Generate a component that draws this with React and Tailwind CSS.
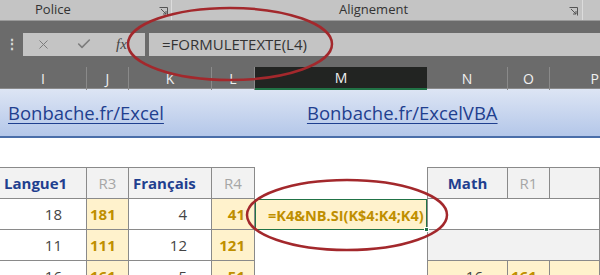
import { X, Check } from 'lucide-react';

const font = { fontFamily: '"Open Sans", "Noto Sans", sans-serif' };

// small ribbon dialog-launcher glyph
const Launcher = () => (
  <svg width="9" height="9" viewBox="0 0 9 9" className="text-[#555]">
    <path d="M0.5 0.5h8v8" fill="none" stroke="currentColor" strokeWidth="1" />
    <path d="M2 2l5 5M4 7h3V4" fill="none" stroke="currentColor" strokeWidth="1" />
  </svg>
);

const cols = 'grid grid-cols-[87px_42px_83px_43px_172px_81px_42px_1fr]';

const Cell = ({ className = '', children }) => (
  <div className={`h-[31px] box-border flex items-center border-r border-b border-[#8a8a8a] ${className}`}>
    {children}
  </div>
);

const Blank = ({ className = '', children }) => (
  <div className={`h-[31px] box-border flex items-center ${className}`}>{children}</div>
);

export default function App() {
  return (
    <div className="w-[600px] h-[275px] overflow-hidden bg-white relative" style={font}>
      {/* ribbon group labels */}
      <div className="h-[21px] bg-[#c4c4c4] flex items-center text-[13px] text-[#333] border-b border-[#9a9a9a]">
        <div className="w-[172px] h-full flex items-center relative border-r border-[#dcdcdc]">
          <span className="ml-[35px]">Police</span>
          <span className="absolute right-[3px] top-[7px]"><Launcher /></span>
        </div>
        <div className="w-[411px] h-full flex items-center relative border-r border-[#dcdcdc]">
          <span className="ml-[167px]">Alignement</span>
          <span className="absolute right-[4px] top-[7px]"><Launcher /></span>
        </div>
      </div>

      {/* formula bar */}
      <div className="h-[46px] bg-[#6b6b6b] flex items-center">
        <div className="w-[23px] flex justify-center text-[#d8d8d8] text-[14px] font-bold leading-none">⋮</div>
        <div className="w-[122px] h-[23px] bg-[#c4c4c4] flex items-center text-[#7c7c7c]">
          <X size={15} strokeWidth={1.6} className="ml-[13px]" />
          <Check size={16} strokeWidth={2.4} className="ml-[25px]" />
          <span className="ml-[24px] italic text-[15px] text-[#444]" style={{ fontFamily: '"Liberation Serif", serif' }}>fx</span>
        </div>
        <div className="ml-[4px] flex-1 h-[23px] bg-[#c4c4c4] flex items-center pl-[13px] text-[15px] text-[#333]">
          =FORMULETEXTE(L4)
        </div>
      </div>

      {/* column headers */}
      <div className="h-[22px] bg-[#6b6b6b] grid grid-cols-[87px_42px_83px_43px_172px_81px_42px_1fr] text-[14px] text-[#f0f0f0] border-b border-[#8a8a8a]">
        <div className="flex items-center justify-center border-r border-[#8a8a8a]">I</div>
        <div className="flex items-center justify-center border-r border-[#8a8a8a]">J</div>
        <div className="flex items-center justify-center border-r border-[#8a8a8a]">K</div>
        <div className="flex items-center justify-center border-r border-[#8a8a8a]">L</div>
        <div className="flex items-center justify-center bg-[#222422] border-b-2 border-[#217346]">M</div>
        <div className="flex items-center justify-center border-r border-[#8a8a8a]">N</div>
        <div className="flex items-center justify-center border-r border-[#8a8a8a]">O</div>
        <div className="flex items-center justify-end pr-[1px]">P</div>
      </div>

      {/* link banner */}
      <div className="h-[49px] bg-gradient-to-b from-[#dde5f4] to-[#b4c7e9] border-b-2 border-[#4a6ea9] flex items-center text-[18.5px] text-[#1f3f8f]">
        <span className="ml-[8px] underline underline-offset-[3px] decoration-1">Bonbache.fr/Excel</span>
        <span className="ml-[143px] underline underline-offset-[3px] decoration-1">Bonbache.fr/ExcelVBA</span>
      </div>

      <div className="h-[29px]" />

      {/* sheet rows */}
      <div className={`${cols} text-[15px] border-t border-[#8a8a8a]`}>
        <Cell className="bg-[#f2f2f2] pl-[4px] font-bold text-[#1f3f8f]">Langue1</Cell>
        <Cell className="bg-[#f2f2f2] justify-center text-[#a6a6a6]">R3</Cell>
        <Cell className="bg-[#f2f2f2] pl-[4px] font-bold text-[#1f3f8f]">Français</Cell>
        <Cell className="bg-[#f2f2f2] justify-center text-[#a6a6a6]">R4</Cell>
        <Blank className="bg-white -mt-px border-t border-white" />
        <Cell className="bg-[#f2f2f2] justify-center font-bold text-[#1f3f8f] border-l">Math</Cell>
        <Cell className="bg-[#f2f2f2] justify-center text-[#a6a6a6]">R1</Cell>
        <Cell className="bg-[#f2f2f2]" />
      </div>
      <div className={`${cols} text-[15px]`}>
        <Cell className="justify-end pr-[24px] text-[#444]">18</Cell>
        <Cell className="bg-[#fff2cc] pl-[3px] font-bold text-[#bf8f00]">181</Cell>
        <Cell className="justify-end pr-[24px] text-[#444]">4</Cell>
        <Cell className="bg-[#fff2cc] justify-end pr-[9px] font-bold text-[#bf8f00]">41</Cell>
        <Blank className="relative bg-[#fff2cc] border border-[#217346] pl-[12px] pt-[2px] text-[14.5px] font-bold text-[#bf8f00]">
          =K4&amp;NB.SI(K$4:K4;K4)
          <span className="absolute -right-[3px] -bottom-[3px] w-[5px] h-[5px] bg-[#217346] border border-white" />
        </Blank>
        <Cell className="border-l border-r-0" />
        <Cell className="border-r-0" />
        <Cell />
      </div>
      <div className={`${cols} text-[15px]`}>
        <Cell className="justify-end pr-[24px] text-[#444]">11</Cell>
        <Cell className="bg-[#fff2cc] pl-[3px] font-bold text-[#bf8f00]">111</Cell>
        <Cell className="justify-end pr-[24px] text-[#444]">12</Cell>
        <Cell className="bg-[#fff2cc] justify-end pr-[9px] font-bold text-[#bf8f00]">121</Cell>
        <Blank />
        <Cell className="bg-[#f2f2f2] border-l border-r-0" />
        <Cell className="bg-[#f2f2f2] border-r-0" />
        <Cell className="bg-[#f2f2f2]" />
      </div>
      <div className={`${cols} text-[15px]`}>
        <Cell className="justify-end pr-[24px] text-[#444]">16</Cell>
        <Cell className="bg-[#fff2cc] pl-[3px] font-bold text-[#bf8f00]">161</Cell>
        <Cell className="justify-end pr-[24px] text-[#444]">5</Cell>
        <Cell className="bg-[#fff2cc] justify-end pr-[9px] font-bold text-[#bf8f00]">51</Cell>
        <Blank />
        <Cell className="bg-[#fff2cc] border-l justify-end pr-[24px] text-[#444]">16</Cell>
        <Cell className="bg-[#fff2cc] pl-[3px] font-bold text-[#bf8f00]">161</Cell>
        <Cell className="bg-[#fff2cc]" />
      </div>

      {/* hand-drawn highlight ellipses */}
      <svg className="absolute inset-0 pointer-events-none" width="600" height="275">
        <ellipse cx="230" cy="44" rx="102" ry="36" fill="none" stroke="#a3282c" strokeWidth="2.5" />
        <ellipse cx="347" cy="215" rx="100" ry="35" fill="none" stroke="#a3282c" strokeWidth="2.5" />
      </svg>
    </div>
  );
}
